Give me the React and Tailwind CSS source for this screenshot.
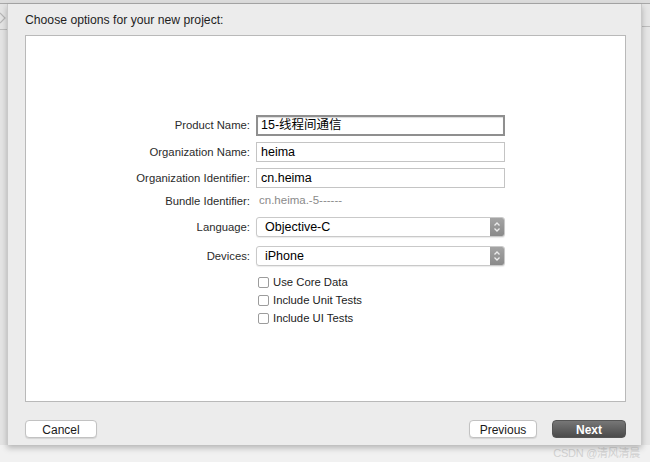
import React from 'react';

const font = { fontFamily: '"Liberation Sans", "Noto Sans CJK SC", Arial, sans-serif' };

const Field = ({ value, focused }) => (
  <div
    className={
      focused
        ? 'w-[249px] h-[21px] border-2 border-[#8f8f8f] bg-white flex items-center pl-[3px] text-[12.5px] text-black shadow-[inset_0_1px_1px_rgba(0,0,0,0.15)]'
        : 'w-[249px] h-[20px] border border-[#c4c4c4] bg-white flex items-center pl-[4px] text-[12.5px] text-black'
    }
  >
    {value}
  </div>
);

const Popup = ({ value }) => (
  <div className="w-[249px] h-[20px] border border-[#c9c9c9] rounded-[3px] bg-white flex items-center shadow-[0_1px_1px_rgba(0,0,0,0.08)]">
    <span className="flex-1 pl-[8px] text-[12.5px] text-black">{value}</span>
    <div className="w-[14px] h-[18px] rounded-r-[2px] bg-gradient-to-b from-[#a4a4a4] to-[#8a8a8a] flex items-center justify-center">
      <svg width="8" height="12" viewBox="0 0 8 12" fill="none" stroke="#ececec" strokeWidth="1.3">
        <path d="M1.5 4.5 L4 2 L6.5 4.5" />
        <path d="M1.5 7.5 L4 10 L6.5 7.5" />
      </svg>
    </div>
  </div>
);

const Row = ({ label, children, className = '' }) => (
  <div className={`flex items-center ${className}`}>
    <div className="w-[230px] pr-[6px] text-right text-[11.3px] text-[#2b2b2b]">{label}</div>
    {children}
  </div>
);

const Check = ({ label, className = '' }) => (
  <div className={`flex items-center h-[12px] pl-[232px] ${className}`}>
    <div className="w-[11px] h-[11px] border border-[#9c9c9c] rounded-[2px] bg-white" />
    <span className="ml-[4px] text-[11.3px] text-[#222]">{label}</span>
  </div>
);

const Button = ({ children, className = '' }) => (
  <button className={`h-[18px] rounded-[4px] border border-[#c2c2c2] bg-white text-[12px] text-[#1a1a1a] shadow-[0_1px_1px_rgba(0,0,0,0.1)] ${className}`}>
    {children}
  </button>
);

export default function App() {
  return (
    <div className="w-[650px] h-[462px] bg-[#f1f1f1] relative overflow-hidden flex flex-col" style={font}>
      {/* window top edge */}
      <div className="h-[4px] bg-[#dcdcdc] border-b border-[#a8a8a8]" />

      <div className="flex">
        {/* left gutter */}
        <div className="w-[7px] h-[441px] bg-[#e4e4e4] flex flex-col">
          <svg className="mt-[8px]" width="7" height="12" viewBox="0 0 7 12" fill="none" stroke="#b5b5b5" strokeWidth="1.2">
            <path d="M0 1 L5 6 L0 11" />
          </svg>
          <div className="mt-[5px] h-px bg-[#bdbdbd]" />
        </div>

        {/* sheet */}
        <div className="w-[635px] h-[441px] bg-[#ececec] border-x border-[#c9c9c9] pl-[17px] pr-[15px] pt-[8px] shadow-[0_3px_6px_rgba(0,0,0,0.25)] z-10 flex flex-col">
          <div className="text-[12.2px] leading-[16px] text-[#1e1e1e]">Choose options for your new project:</div>

          <div className="mt-[7px] h-[367px] bg-white border border-[#b9b9b9] pt-[79px]">
            <Row label="Product Name:">
              <Field value="15-线程间通信" focused />
            </Row>
            <Row label="Organization Name:" className="mt-[6px]">
              <Field value="heima" />
            </Row>
            <Row label="Organization Identifier:" className="mt-[6px]">
              <Field value="cn.heima" />
            </Row>
            <Row label="Bundle Identifier:" className="mt-[5px] h-[16px]">
              <span className="pl-[3px] text-[11.5px] text-[#8a8a8a]">cn.heima.-5------</span>
            </Row>
            <Row label="Language:" className="mt-[8px]">
              <Popup value="Objective-C" />
            </Row>
            <Row label="Devices:" className="mt-[9px]">
              <Popup value="iPhone" />
            </Row>
            <Check label="Use Core Data" className="mt-[10px]" />
            <Check label="Include Unit Tests" className="mt-[6px]" />
            <Check label="Include UI Tests" className="mt-[6px]" />
          </div>

          <div className="mt-[18px] flex items-center">
            <Button className="w-[72px]">Cancel</Button>
            <div className="flex-1" />
            <Button className="w-[68px]">Previous</Button>
            <button className="ml-[15px] w-[74px] h-[18px] rounded-[4px] bg-gradient-to-b from-[#777777] to-[#4b4b4b] border border-[#555] text-[12px] font-bold text-white">
              Next
            </button>
          </div>
        </div>

        {/* right gutter */}
        <div className="flex-1 h-[441px] bg-[#e6e6e6] flex flex-col">
          <div className="mt-[22px] h-px bg-[#bdbdbd]" />
        </div>
      </div>

      {/* cursor */}
      <svg className="absolute left-[339px] top-[86px]" width="18" height="30" viewBox="0 0 18 30">
        <path d="M1 1 L1 22 L6 17 L10 27 L13 25.5 L9 16 L16 16 Z" fill="#111" stroke="#fff" strokeWidth="1" />
      </svg>

      {/* watermark */}
      <div className="absolute right-[10px] bottom-[1px] text-[11px] text-[#d2d2d2] tracking-tight">CSDN @清风清晨</div>
    </div>
  );
}
